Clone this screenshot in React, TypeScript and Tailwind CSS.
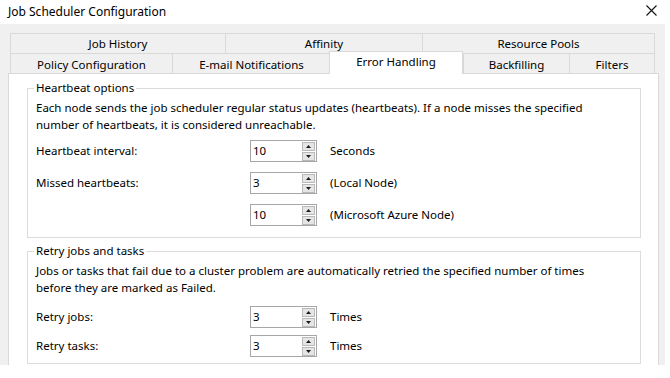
import React from "react";

function SpinBtn({ up }: { up?: boolean }) {
  return (
    <div className="w-[13px] h-[9px] bg-[#e5e5e5] border border-[#b9b9b9] flex items-center justify-center">
      <svg width="5" height="3" viewBox="0 0 5 3">
        {up ? <polygon points="2.5,0 5,3 0,3" fill="#1a1a1a" /> : <polygon points="0,0 5,0 2.5,3" fill="#1a1a1a" />}
      </svg>
    </div>
  );
}

function Spin({ value }: { value: string }) {
  return (
    <div className="w-[67px] h-[22px] border border-[#a6a6a6] bg-white flex items-center justify-between pl-[2px] pr-[1px] shrink-0">
      <span className="text-[11.5px] leading-none text-black">{value}</span>
      <div className="flex flex-col gap-[1px]">
        <SpinBtn up />
        <SpinBtn />
      </div>
    </div>
  );
}

function Row({ label, value, unit, className = "" }: { label: string; value: string; unit: string; className?: string }) {
  return (
    <div className={"flex items-center h-[22px] pl-[2px] " + className}>
      <div className="w-[214px] shrink-0">{label}</div>
      <Spin value={value} />
      <div className="ml-[13px]">{unit}</div>
    </div>
  );
}

function Tab({ label, w, selected, top }: { label: string; w: string; selected?: boolean; top?: boolean }) {
  if (selected) {
    return (
      <div className={"relative z-10 -mt-[2px] h-[23px] bg-white border border-b-0 border-[#d9d9d9] flex items-start justify-center pt-[2px] -ml-[1px] " + w}>
        {label}
      </div>
    );
  }
  return (
    <div className={"h-[20px] border-t border-l border-[#d9d9d9] last:border-r flex items-center justify-center bg-[#f0f0f0] " + (top ? "pt-0 " : "pt-[2px] ") + w}>
      {label}
    </div>
  );
}

export default function App() {
  return (
    <div className="w-[670px] h-[378px] bg-white overflow-hidden text-[11.5px] leading-[16px] text-black font-['Noto_Sans',sans-serif]">
      <div className="h-[24px] flex items-center justify-between pl-[8px] pr-[13px]">
        <span className="text-[12px]">Job Scheduler Configuration</span>
        <svg width="11" height="11" viewBox="0 0 11 11" className="-mt-[4px]">
          <path d="M0.5 0.5 L10.5 10.5 M10.5 0.5 L0.5 10.5" stroke="#111" strokeWidth="1.1" />
        </svg>
      </div>
      <div className="w-[665px] h-[341px] bg-[#f0f0f0] pt-[9px]">
        <div className="ml-[10px] w-[645px]">
          <div className="flex h-[20px]">
            <Tab top label="Job History" w="w-[215px]" />
            <Tab top label="Affinity" w="w-[197px]" />
            <Tab top label="Resource Pools" w="w-[233px]" />
          </div>
          <div className="flex h-[20px]">
            <Tab label="Policy Configuration" w="w-[162px]" />
            <Tab label="E-mail Notifications" w="w-[158px]" />
            <Tab selected label="Error Handling" w="w-[134px]" />
            <Tab label="Backfilling" w="w-[106px]" />
            <Tab label="Filters" w="w-[86px]" />
          </div>
        </div>
        <div className="ml-[8px] w-[651px] h-[292px] border border-b-0 border-[#d9d9d9] bg-white pt-[6px]">
          <fieldset className="ml-[18px] w-[614px] border border-[#dcdcdc] m-0 px-[6px] pb-[11px] pt-0">
            <legend className="px-[2px] leading-[16px]">Heartbeat options</legend>
            <div className="pl-[2px] mt-[3px] leading-[17px]">
              Each node sends the job scheduler regular status updates (heartbeats). If a node misses the specified
              <br />
              number of heartbeats, it is considered unreachable.
            </div>
            <Row className="mt-[7px]" label="Heartbeat interval:" value="10" unit="Seconds" />
            <Row className="mt-[10px]" label="Missed heartbeats:" value="3" unit="(Local Node)" />
            <Row className="mt-[10px]" label="" value="10" unit="(Microsoft Azure Node)" />
          </fieldset>
          <fieldset className="ml-[18px] mt-[5px] w-[614px] border border-[#dcdcdc] m-0 px-[6px] pb-[6px] pt-0">
            <legend className="px-[2px] leading-[16px]">Retry jobs and tasks</legend>
            <div className="pl-[2px] mt-[3px] leading-[17px]">
              Jobs or tasks that fail due to a cluster problem are automatically retried the specified number of times
              <br />
              before they are marked as Failed.
            </div>
            <Row className="mt-[10px]" label="Retry jobs:" value="3" unit="Times" />
            <Row className="mt-[7px]" label="Retry tasks:" value="3" unit="Times" />
          </fieldset>
        </div>
      </div>
    </div>
  );
}
